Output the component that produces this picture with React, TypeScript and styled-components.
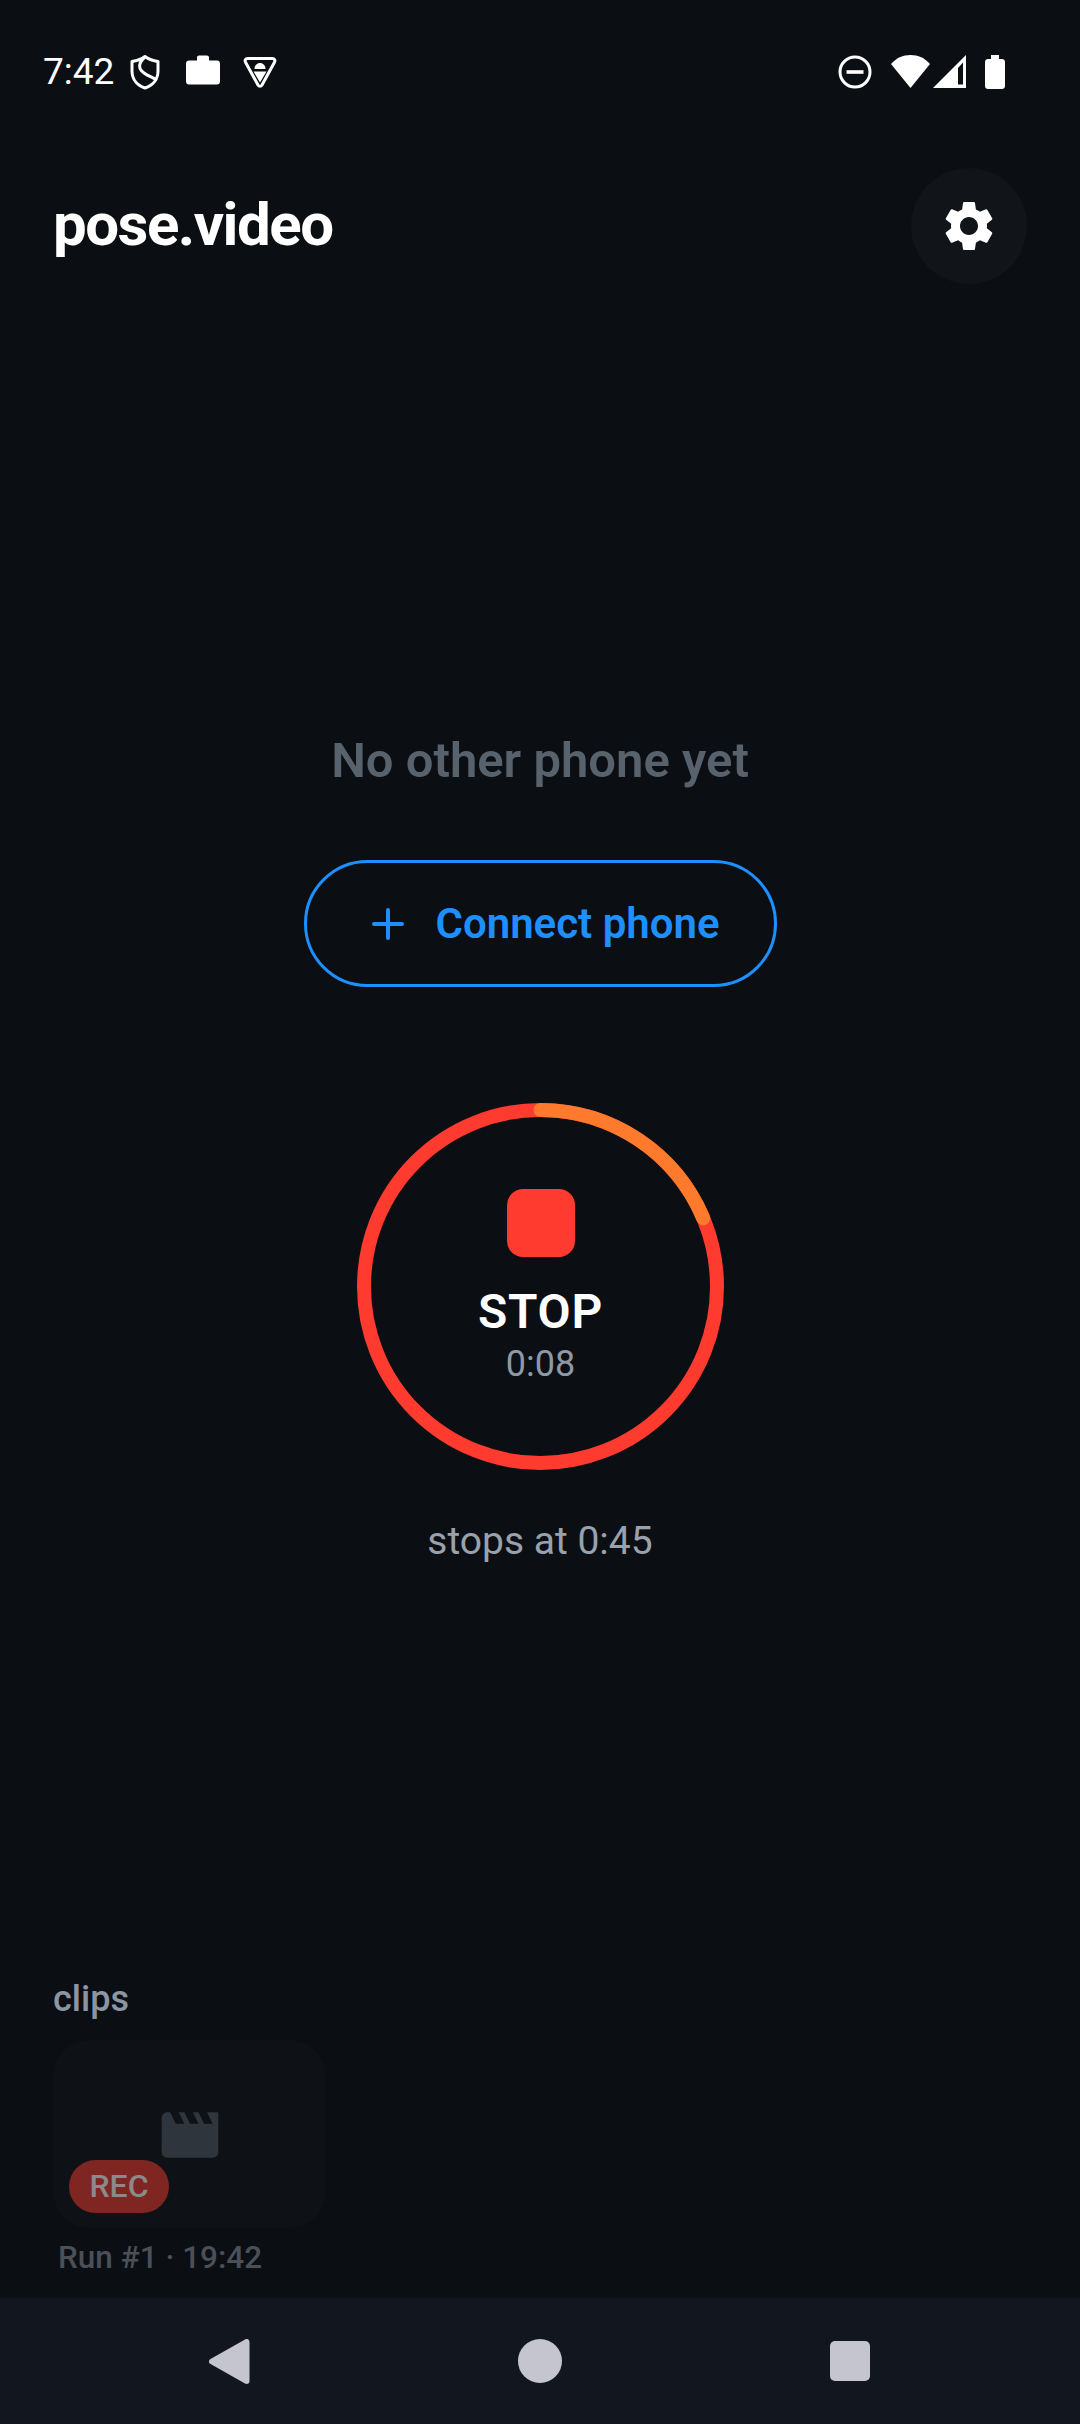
import React from 'react';
import styled, { createGlobalStyle } from 'styled-components';
import { MdMovie, MdSettings } from 'react-icons/md';

const GlobalStyle = createGlobalStyle`
  html, body {
    margin: 0;
    padding: 0;
    background: #0b0e13;
  }
  * {
    box-sizing: border-box;
  }
`;

const RING_SIZE = 367;
const RING_STROKE = 14;
const RING_RADIUS = (RING_SIZE - RING_STROKE) / 2;
const RING_LENGTH = 2 * Math.PI * RING_RADIUS;
const ELAPSED = 8.4;
const LIMIT = 45;

export default function App() {
  return (
    <Page>
      <GlobalStyle />
      <StatusBar>
        <Time>7:42</Time>
        <LeftIcons>
          <ShieldIcon />
          <CaseIcon />
          <BugIcon />
        </LeftIcons>
        <RightIcons>
          <DndIcon />
          <WifiIcon />
          <SignalIcon />
          <BatteryIcon />
        </RightIcons>
      </StatusBar>

      <Header>
        <Title>pose.video</Title>
        <SettingsButton>
          <MdSettings size={60} color="#ffffff" />
        </SettingsButton>
      </Header>

      <Main>
        <Hint>No other phone yet</Hint>
        <ConnectButton>
          <svg width="32" height="32" viewBox="0 0 32 32">
            <path d="M16 2V30M2 16H30" stroke="#1e8fff" strokeWidth="4" strokeLinecap="round" fill="none" />
          </svg>
          Connect phone
        </ConnectButton>
        <Ring>
          <RingSvg width={RING_SIZE} height={RING_SIZE} viewBox={`0 0 ${RING_SIZE} ${RING_SIZE}`}>
            <circle
              cx={RING_SIZE / 2}
              cy={RING_SIZE / 2}
              r={RING_RADIUS}
              fill="none"
              stroke="#ff3b30"
              strokeWidth={RING_STROKE}
            />
            <circle
              cx={RING_SIZE / 2}
              cy={RING_SIZE / 2}
              r={RING_RADIUS}
              fill="none"
              stroke="#ff7a2d"
              strokeWidth={RING_STROKE}
              strokeLinecap="round"
              strokeDasharray={`${(RING_LENGTH * ELAPSED) / LIMIT} ${RING_LENGTH}`}
              transform={`rotate(-90 ${RING_SIZE / 2} ${RING_SIZE / 2})`}
            />
          </RingSvg>
          <RingContent>
            <StopSquare />
            <StopLabel>STOP</StopLabel>
            <Elapsed>0:08</Elapsed>
          </RingContent>
        </Ring>
        <StopsAt>stops at 0:45</StopsAt>
      </Main>

      <Clips>
        <ClipsLabel>clips</ClipsLabel>
        <ClipCard>
          <MdMovie size={68} color="#2f353c" />
          <RecBadge>REC</RecBadge>
        </ClipCard>
        <ClipName>Run #1 · 19:42</ClipName>
      </Clips>

      <NavBar>
        <svg width="41" height="45" viewBox="0 0 41 45">
          <path d="M3 22.5L37.5 3V42Z" fill="#c5c5cf" stroke="#c5c5cf" strokeWidth="6" strokeLinejoin="round" />
        </svg>
        <HomeDot />
        <RecentsSquare />
      </NavBar>
    </Page>
  );
}

function ShieldIcon() {
  return (
    <svg width="36" height="36" viewBox="0 0 36 36" fill="none" stroke="#fff" strokeWidth="3">
      <path d="M18 2.5C22 5.5 27 7 31 7.5V17C31 25.5 25.5 31.5 18 34C10.5 31.5 5 25.5 5 17V7.5C9 7 14 5.5 18 2.5Z" strokeLinejoin="round" />
      <path d="M18 3C11 9 11 15 17 19C21 22 25 23 30 26" />
    </svg>
  );
}

function CaseIcon() {
  return (
    <svg width="36" height="36" viewBox="0 0 36 36" fill="#fff">
      <path d="M12 6.5V3.5C12 2.4 12.9 1.5 14 1.5H22C23.1 1.5 24 2.4 24 3.5V6.5H32C33.7 6.5 35 7.8 35 9.5V27.5C35 29.2 33.7 30.5 32 30.5H4C2.3 30.5 1 29.2 1 27.5V9.5C1 7.8 2.3 6.5 4 6.5Z" />
    </svg>
  );
}

function BugIcon() {
  return (
    <svg width="36" height="36" viewBox="0 0 36 36">
      <path d="M5.5 4.5H30.5C32.5 4.5 33.5 6.5 32.5 8.2L20 31C19 32.6 17 32.6 16 31L3.5 8.2C2.5 6.5 3.5 4.5 5.5 4.5Z" fill="none" stroke="#fff" strokeWidth="3" strokeLinejoin="round" />
      <path d="M12.5 15C12.5 11.5 15 9 18 9C21 9 23.5 11.5 23.5 15Z" fill="#fff" />
      <path d="M11.5 17.5H24.5L18 28.5Z" fill="#fff" />
    </svg>
  );
}

function DndIcon() {
  return (
    <svg width="34" height="34" viewBox="0 0 34 34">
      <circle cx="17" cy="17" r="15" fill="none" stroke="#fff" strokeWidth="3" />
      <rect x="8.5" y="15.2" width="17" height="3.6" fill="#fff" />
    </svg>
  );
}

function WifiIcon() {
  return (
    <svg width="39" height="33" viewBox="0 0 39 33" fill="#fff">
      <path d="M19.5 33L0 9C5 3.2 12 0 19.5 0C27 0 34 3.2 39 9Z" />
    </svg>
  );
}

function SignalIcon() {
  return (
    <svg width="33" height="33" viewBox="0 0 33 33" fill="#fff">
      <path fillRule="evenodd" d="M33 0V33H0ZM30 7.5L25 13V29.5H30Z" />
    </svg>
  );
}

function BatteryIcon() {
  return (
    <svg width="20" height="34" viewBox="0 0 20 34" fill="#fff">
      <path d="M6 0H14V4H17C18.7 4 20 5.3 20 7V31C20 32.7 18.7 34 17 34H3C1.3 34 0 32.7 0 31V7C0 5.3 1.3 4 3 4H6Z" />
    </svg>
  );
}

const Page = styled.div`
  display: flex;
  flex-direction: column;
  width: 1080px;
  height: 2424px;
  overflow: hidden;
  background: #0b0e13;
  font-family: Roboto, "Liberation Sans", sans-serif;
`;

const StatusBar = styled.div`
  display: flex;
  align-items: center;
  height: 143px;
  padding: 0 75px 0 43px;
  color: #ffffff;
`;

const Time = styled.span`
  font-size: 37px;
  line-height: 42px;
`;

const LeftIcons = styled.div`
  display: flex;
  align-items: center;
  gap: 21.5px;
  margin-left: 13px;
`;

const RightIcons = styled.div`
  display: flex;
  align-items: center;
  margin-left: auto;

  svg:nth-child(2) {
    margin-left: 19px;
  }
  svg:nth-child(3) {
    margin-left: 3px;
  }
  svg:nth-child(4) {
    margin-left: 19px;
  }
`;

const Header = styled.header`
  display: flex;
  align-items: center;
  justify-content: space-between;
  height: 116px;
  margin-top: 25px;
  padding: 0 53px 0 53px;
`;

const Title = styled.h1`
  margin: -3px 0 0;
  font-size: 60px;
  font-weight: 700;
  letter-spacing: -1.5px;
  color: #ffffff;
`;

const SettingsButton = styled.div`
  display: flex;
  align-items: center;
  justify-content: center;
  width: 116px;
  height: 116px;
  border-radius: 50%;
  background: #111419;
`;

const Main = styled.main`
  display: flex;
  flex-direction: column;
  align-items: center;
`;

const Hint = styled.div`
  margin-top: 449px;
  font-size: 49px;
  line-height: 56px;
  font-weight: 600;
  color: #58626d;
`;

const ConnectButton = styled.div`
  display: flex;
  align-items: center;
  justify-content: center;
  gap: 31px;
  width: 473px;
  height: 127px;
  margin-top: 71px;
  padding-left: 8px;
  border: 3px solid #1e8fff;
  border-radius: 64px;
  font-size: 42px;
  font-weight: 600;
  color: #1e8fff;

  svg {
    margin-left: 4px;
  }
`;

const Ring = styled.div`
  position: relative;
  width: ${RING_SIZE}px;
  height: ${RING_SIZE}px;
  margin: 116px 0 0 1px;
`;

const RingSvg = styled.svg`
  display: block;
`;

const RingContent = styled.div`
  position: absolute;
  inset: 0;
  display: flex;
  flex-direction: column;
  align-items: center;
  padding-top: 86px;
`;

const StopSquare = styled.div`
  width: 68px;
  height: 68px;
  border-radius: 16px;
  background: #ff3b30;
`;

const StopLabel = styled.div`
  margin-top: 27px;
  font-size: 48px;
  line-height: 56px;
  font-weight: 600;
  letter-spacing: 0.8px;
  color: #ffffff;
`;

const Elapsed = styled.div`
  margin-top: 3px;
  font-size: 36px;
  line-height: 42px;
  color: #8e99a8;
`;

const StopsAt = styled.div`
  margin-top: 48px;
  font-size: 39px;
  line-height: 46px;
  color: #98a2ae;
`;

const Clips = styled.section`
  display: flex;
  flex-direction: column;
  align-items: flex-start;
  margin-top: auto;
  padding: 0 53px;
`;

const ClipsLabel = styled.div`
  font-size: 36px;
  line-height: 42px;
  font-weight: 500;
  color: #8c96a2;
`;

const ClipCard = styled.div`
  position: relative;
  display: flex;
  align-items: center;
  justify-content: center;
  width: 273px;
  height: 188px;
  margin-top: 20px;
  padding-top: 2px;
  border-radius: 36px;
  background: #0e1116;
`;

const RecBadge = styled.span`
  position: absolute;
  left: 16px;
  bottom: 15px;
  display: flex;
  align-items: center;
  justify-content: center;
  width: 100px;
  height: 53px;
  padding-bottom: 2px;
  border-radius: 27px;
  background: #7f2522;
  font-size: 32px;
  font-weight: 500;
  color: #8a8a8a;
`;

const ClipName = styled.div`
  margin: 12px 0 22px 5px;
  font-size: 31.5px;
  line-height: 36px;
  font-weight: 500;
  color: #4a5058;
`;

const NavBar = styled.nav`
  display: flex;
  align-items: center;
  justify-content: center;
  gap: 268px;
  height: 126px;
  padding-right: 2px;
  background: #12161e;
`;

const HomeDot = styled.div`
  width: 44px;
  height: 44px;
  border-radius: 50%;
  background: #c5c5cf;
`;

const RecentsSquare = styled.div`
  width: 40px;
  height: 40px;
  border-radius: 5px;
  background: #c5c5cf;
`;
